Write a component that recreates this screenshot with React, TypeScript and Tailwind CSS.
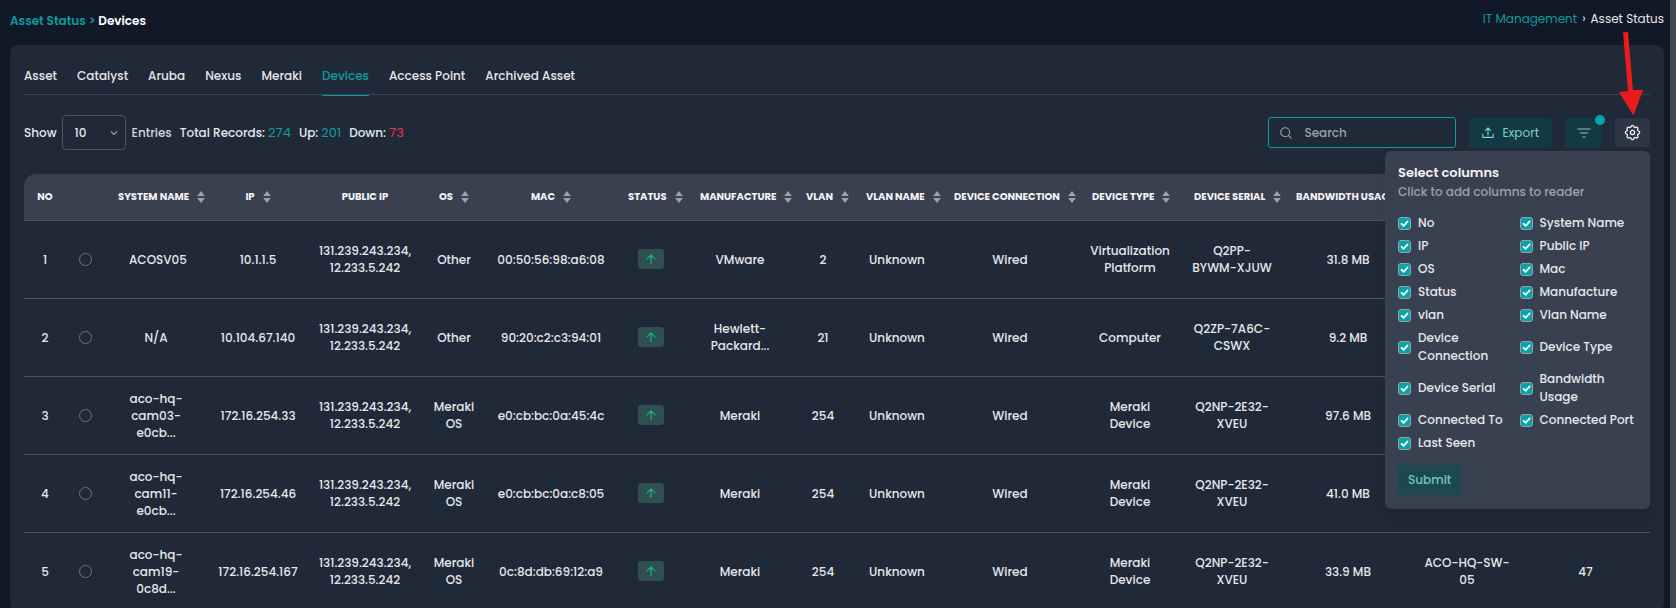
import React, { useState } from 'react';

interface Device {
  no: number;
  name: string;
  ip: string;
  os: string;
  mac: string;
  manufacture: string;
  vlan: string;
  type: string;
  serial: string;
  usage: string;
  connectedTo: string;
  port: string;
}

interface Column {
  label: string;
  width: string;
  sortable: boolean;
}

const tabs = ['Asset', 'Catalyst', 'Aruba', 'Nexus', 'Meraki', 'Devices', 'Access Point', 'Archived Asset'];

const columns: Column[] = [
  { label: 'NO', width: 'w-[42px]', sortable: false },
  { label: '', width: 'w-[39px]', sortable: false },
  { label: 'SYSTEM NAME', width: 'w-[102px]', sortable: true },
  { label: 'IP', width: 'w-[102px]', sortable: true },
  { label: 'PUBLIC IP', width: 'w-[112px]', sortable: false },
  { label: 'OS', width: 'w-[66px]', sortable: true },
  { label: 'MAC', width: 'w-[128px]', sortable: true },
  { label: 'STATUS', width: 'w-[72px]', sortable: true },
  { label: 'MANUFACTURE', width: 'w-[106px]', sortable: true },
  { label: 'VLAN', width: 'w-[60px]', sortable: true },
  { label: 'VLAN NAME', width: 'w-[88px]', sortable: true },
  { label: 'DEVICE CONNECTION', width: 'w-[138px]', sortable: true },
  { label: 'DEVICE TYPE', width: 'w-[102px]', sortable: true },
  { label: 'DEVICE SERIAL', width: 'w-[102px]', sortable: true },
  { label: 'BANDWIDTH USAGE', width: 'w-[130px]', sortable: true },
  { label: '', width: 'w-[108px]', sortable: false },
  { label: '', width: 'w-[129px]', sortable: false },
];

const devices: Device[] = [
  { no: 1, name: 'ACOSV05', ip: '10.1.1.5', os: 'Other', mac: '00:50:56:98:a6:08', manufacture: 'VMware', vlan: '2', type: 'Virtualization Platform', serial: 'Q2PP-BYWM-XJUW', usage: '31.8 MB', connectedTo: '', port: '' },
  { no: 2, name: 'N/A', ip: '10.104.67.140', os: 'Other', mac: '90:20:c2:c3:94:01', manufacture: 'Hewlett-Packard...', vlan: '21', type: 'Computer', serial: 'Q2ZP-7A6C-CSWX', usage: '9.2 MB', connectedTo: '', port: '' },
  { no: 3, name: 'aco-hq-cam03-e0cb...', ip: '172.16.254.33', os: 'Meraki OS', mac: 'e0:cb:bc:0a:45:4c', manufacture: 'Meraki', vlan: '254', type: 'Meraki Device', serial: 'Q2NP-2E32-XVEU', usage: '97.6 MB', connectedTo: '', port: '' },
  { no: 4, name: 'aco-hq-cam11-e0cb...', ip: '172.16.254.46', os: 'Meraki OS', mac: 'e0:cb:bc:0a:c8:05', manufacture: 'Meraki', vlan: '254', type: 'Meraki Device', serial: 'Q2NP-2E32-XVEU', usage: '41.0 MB', connectedTo: '', port: '' },
  { no: 5, name: 'aco-hq-cam19-0c8d...', ip: '172.16.254.167', os: 'Meraki OS', mac: '0c:8d:db:69:12:a9', manufacture: 'Meraki', vlan: '254', type: 'Meraki Device', serial: 'Q2NP-2E32-XVEU', usage: '33.9 MB', connectedTo: 'ACO-HQ-SW-05', port: '47' },
];

const columnOptions = [
  'No', 'System Name', 'IP', 'Public IP', 'OS', 'Mac', 'Status', 'Manufacture', 'vlan', 'Vlan Name',
  'Device Connection', 'Device Type', 'Device Serial', 'Bandwidth Usage', 'Connected To', 'Connected Port', 'Last Seen',
];

const SortIcon = () => (
  <svg width="8" height="12" viewBox="0 0 8 12" fill="#9ca3af" className="shrink-0">
    <path d="M4 0L7.800 5H.2z" />
    <path d="M4 12L.2 7h7.600z" />
  </svg>
);

const ColumnPicker = () => {
  const [hidden, setHidden] = useState<string[]>([]);

  const toggle = (name: string) => {
    setHidden(hidden.includes(name) ? hidden.filter(h => h !== name) : [...hidden, name]);
  };

  return (
    <form
      onSubmit={(e) => e.preventDefault()}
      className="absolute right-0 top-full z-10 mt-[3px] w-[265px] rounded-md bg-[#394150] px-[13px] pt-3 pb-3.5 shadow-lg"
    >
      <h3 className="text-[13px] leading-5 font-semibold text-gray-100">Select columns</h3>
      <p className="text-[12px] leading-[18px] text-gray-400">Click to add columns to reader</p>
      <div className="mt-[13px] grid grid-cols-2 gap-x-1 gap-y-[5px]">
        {columnOptions.map((name) => (
          <label key={name} className="flex items-center gap-[7px] text-[12px] leading-[18px] font-medium text-gray-200">
            <span className="relative flex h-[13px] w-[13px] shrink-0">
              <input
                type="checkbox"
                checked={!hidden.includes(name)}
                onChange={() => toggle(name)}
                className="peer h-[13px] w-[13px] appearance-none rounded-[3px] border border-gray-400 checked:bg-[#06a3a8]"
              />
              <svg viewBox="0 0 13 13" fill="none" stroke="white" strokeWidth="1.8" strokeLinecap="round" strokeLinejoin="round" className="pointer-events-none invisible absolute inset-0 peer-checked:visible">
                <path d="M3.6 6.8l2 2 4-4.4" />
              </svg>
            </span>
            <span>{name}</span>
          </label>
        ))}
      </div>
      <button type="submit" className="mt-[13px] h-[30px] rounded bg-[#1d4850] px-2.5 text-[12px] font-medium text-[#6fc5c3]">Submit</button>
    </form>
  );
};

const Toolbar = () => {
  const [showPicker, setShowPicker] = useState(true);

  return (
    <div className="mt-5 flex items-center justify-between text-[12px] font-medium text-gray-200">
      <div className="flex items-center">
        <label htmlFor="entries">Show</label>
        <div className="relative mx-[5px]">
          <select id="entries" defaultValue="10" className="h-[35px] w-[64px] appearance-none rounded border border-gray-600 bg-transparent pl-3 text-[12px] outline-none">
            <option>10</option>
            <option>25</option>
            <option>50</option>
          </select>
          <svg width="8" height="8" viewBox="0 0 8 8" fill="none" stroke="#9ca3af" strokeWidth="1.1" className="pointer-events-none absolute right-2 top-[14px]">
            <path d="M1 2.5l3 3 3-3" />
          </svg>
        </div>
        <span className="ml-px text-gray-300">Entries</span>
        <span className="ml-2">Total Records: <span className="text-[13px] font-normal text-[#0d9c9c]">274</span></span>
        <span className="ml-2">Up: <span className="text-[13px] font-normal text-[#0d9c9c]">201</span></span>
        <span className="ml-2">Down: <span className="text-[13px] font-normal text-[#e8344e]">73</span></span>
      </div>

      <div className="relative flex items-center gap-[13px]">
        <div className="relative">
          <svg width="12" height="12" viewBox="0 0 12 12" fill="none" stroke="#9ca3af" strokeWidth="1.1" strokeLinecap="round" className="absolute left-3 top-[10px]">
            <circle cx="5.2" cy="5.2" r="4.5" />
            <path d="M8.6 8.6l2.6 2.6" />
          </svg>
          <input type="text" placeholder="Search" aria-label="Search" className="h-[31px] w-[188px] rounded-[3px] border border-[#0d9c9c] bg-transparent pl-[35px] pr-3 text-[12px] outline-none placeholder:text-gray-400" />
        </div>
        <button className="flex h-[30px] items-center gap-2 rounded bg-[#133a42] px-[13px] text-[12px] font-normal text-[#7ad0cc]">
          <svg width="12" height="12" viewBox="0 0 12 12" fill="none" stroke="currentColor" strokeWidth="1.1" strokeLinecap="round" strokeLinejoin="round">
            <path d="M6 8V1M3.4 3.4L6 .8l2.6 2.6M.8 7.4v3h10.4v-3" />
          </svg>
          Export
        </button>
        <button aria-label="Filter" className="relative flex h-[30px] w-[37px] items-center justify-center rounded bg-[#133a42] text-[#7ad0cc]">
          <svg width="14" height="10" viewBox="0 0 14 10" fill="none" stroke="currentColor" strokeWidth="1.2">
            <path d="M.5 1h13M3 5h8M5.5 9h3" />
          </svg>
          <span className="absolute -right-[3px] -top-[3px] h-2.5 w-2.5 rounded-full bg-[#06a3a8]"></span>
        </button>
        <button aria-label="Select columns" onClick={() => setShowPicker(!showPicker)} className="flex h-[29px] w-[35px] items-center justify-center rounded bg-[#2d3646] text-gray-100">
          <svg width="19" height="19" viewBox="0 0 24 24" fill="none" stroke="currentColor" strokeWidth="1.6" strokeLinejoin="round">
            <path d="M10.3 4.3c.4-1.8 2.9-1.8 3.4 0a1.7 1.7 0 0 0 2.6 1.1c1.5-.9 3.3.8 2.4 2.4a1.7 1.7 0 0 0 1 2.5c1.8.4 1.8 2.9 0 3.4a1.7 1.7 0 0 0-1 2.6c.9 1.5-.9 3.3-2.4 2.4a1.7 1.7 0 0 0-2.6 1c-.4 1.8-2.9 1.8-3.4 0a1.7 1.7 0 0 0-2.6-1c-1.5.9-3.3-.9-2.4-2.4a1.7 1.7 0 0 0-1-2.6c-1.8-.4-1.8-2.900 0-3.400a1.7 1.7 0 0 0 1-2.500c-.9-1.600.9-3.300 2.400-2.400a1.7 1.7 0 0 0 2.600-1.100z" />
            <circle cx="12" cy="12" r="2.6" />
          </svg>
        </button>
        {showPicker && <ColumnPicker />}
      </div>
    </div>
  );
};

const DeviceTable = () => (
  <table className="mt-6 w-full table-fixed border-collapse text-center text-[12px] leading-[17px] font-medium text-gray-200">
    <colgroup>
      {columns.map((col, idx) => <col key={idx} className={col.width} />)}
    </colgroup>
    <thead>
      <tr className="h-[46px] border-b border-gray-600 text-[10px] font-semibold text-gray-100">
        {columns.map((col, idx) => (
          <th key={idx} scope="col" className="bg-[#394150] px-[13px] first:rounded-tl-xl last:rounded-tr-xl">
            <div className="flex w-full min-w-max items-center justify-center gap-2 whitespace-nowrap">
              {col.label}
              {col.sortable && <SortIcon />}
            </div>
          </th>
        ))}
      </tr>
    </thead>
    <tbody>
      {devices.map((device) => (
        <tr key={device.no} className="h-[78px] border-b border-gray-600">
          <td>{device.no}</td>
          <td>
            <input type="radio" name="device" aria-label={`Select ${device.name}`} className="mt-1 h-[13px] w-[13px] appearance-none rounded-full border border-gray-500 checked:bg-[#06a3a8]" />
          </td>
          <td className="px-6">{device.name}</td>
          <td>{device.ip}</td>
          <td>131.239.243.234, 12.233.5.242</td>
          <td className="px-3">{device.os}</td>
          <td>{device.mac}</td>
          <td>
            <span className="inline-flex h-5 w-[26px] items-center justify-center rounded-[3px] bg-[#2f4f50] align-middle">
              <svg width="10" height="10" viewBox="0 0 10 10" fill="none" stroke="#10b981" strokeWidth="1.2" strokeLinecap="round" strokeLinejoin="round">
                <path d="M5 9.4V.8M1 4.8l4-4 4 4" />
              </svg>
            </span>
          </td>
          <td className="px-5">{device.manufacture}</td>
          <td>{device.vlan}</td>
          <td>Unknown</td>
          <td>Wired</td>
          <td className="px-[11px]">{device.type}</td>
          <td className="px-[11px]">{device.serial}</td>
          <td>{device.usage}</td>
          <td className="px-2">{device.connectedTo}</td>
          <td>{device.port}</td>
        </tr>
      ))}
    </tbody>
  </table>
);

const App: React.FC = () => {
  const [activeTab, setActiveTab] = useState('Devices');

  return (
    <div className="relative flex h-screen overflow-hidden bg-[#111827] font-['Poppins','Inter',sans-serif]">
      <div className="min-w-0 flex-1 pl-2.5 pr-1.5">
        <header className="flex h-[45px] items-center justify-between pb-[3px]">
          <h1 className="text-[12px] font-semibold text-white">
            <a href="#asset-status" className="text-[#0d9c9c]">Asset Status &gt;</a> Devices
          </h1>
          <nav aria-label="Breadcrumb" className="flex items-center gap-[5px] pb-1 text-[12px] text-gray-200">
            <a href="#it-management" className="text-[#0d9c9c]">IT Management</a>
            <span>›</span>
            <span>Asset Status</span>
          </nav>
        </header>

        <main className="rounded-lg bg-[#202938] px-3.5 pt-5">
          <div role="tablist" className="flex gap-5 border-b border-gray-700 text-[12px] font-medium text-gray-200">
            {tabs.map((tab) => (
              <button
                key={tab}
                role="tab"
                aria-selected={tab === activeTab}
                onClick={() => setActiveTab(tab)}
                className={`-mb-0.5 h-[31px] border-b pb-2 ${tab === activeTab ? 'border-[#0d9c9c] text-[#0d9c9c]' : 'border-transparent'}`}
              >
                {tab}
              </button>
            ))}
          </div>
          <Toolbar />
          <DeviceTable />
        </main>
      </div>
      <div className="w-1.5 shrink-0 bg-[#414756]"></div>

      {/* pointer to the column settings button */}
      <svg width="26" height="84" viewBox="0 0 26 84" fill="#e91c1c" className="pointer-events-none absolute right-[32px] top-[32px] z-20">
        <path d="M5 .5L10 0l5 58h10L15.500 83.500 1 60l9-1z" />
      </svg>
    </div>
  );
};

export default App;
